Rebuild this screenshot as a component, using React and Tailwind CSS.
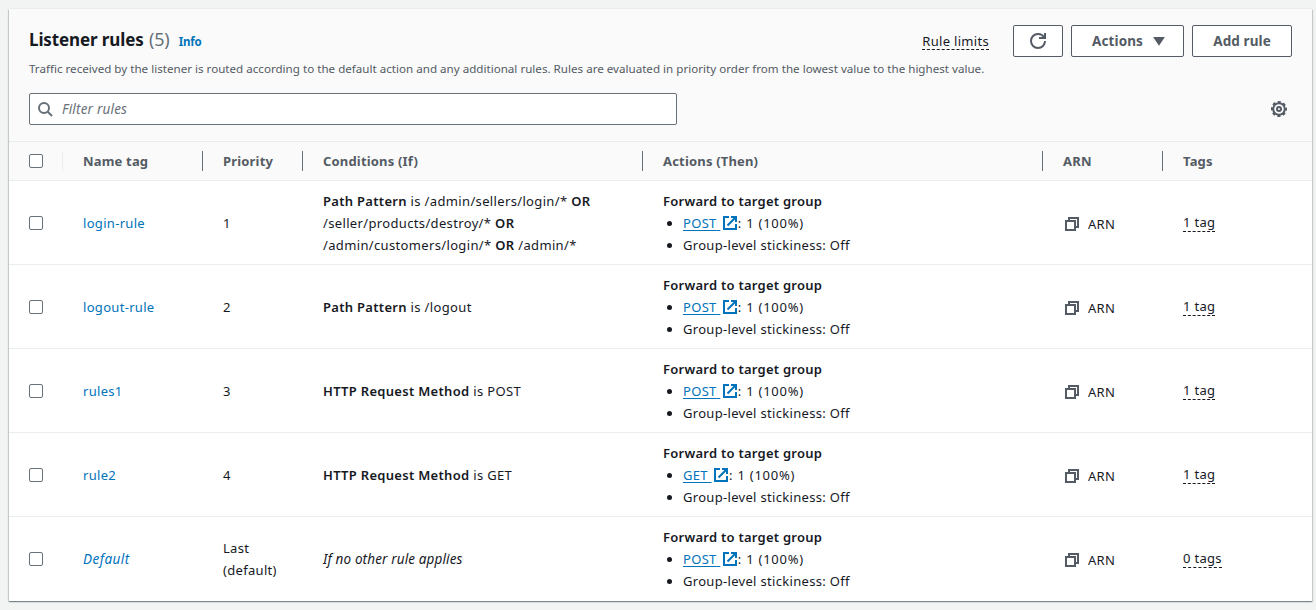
const COLUMNS = 'grid grid-cols-[54px_140px_100px_340px_400px_120px_1fr]';

const RULES = [
  {
    name: 'login-rule',
    priority: '1',
    field: 'Path Pattern',
    values: ['/admin/sellers/login/*', '/seller/products/destroy/*', '/admin/customers/login/*', '/admin/*'],
    target: 'POST',
    tags: '1 tag',
  },
  { name: 'logout-rule', priority: '2', field: 'Path Pattern', values: ['/logout'], target: 'POST', tags: '1 tag' },
  { name: 'rules1', priority: '3', field: 'HTTP Request Method', values: ['POST'], target: 'POST', tags: '1 tag' },
  { name: 'rule2', priority: '4', field: 'HTTP Request Method', values: ['GET'], target: 'GET', tags: '1 tag' },
  { name: 'Default', priority: 'Last (default)', isDefault: true, target: 'POST', tags: '0 tags' },
];

const HEADERS = ['Name tag', 'Priority', 'Conditions (If)', 'Actions (Then)', 'ARN', 'Tags'];

function Icon({ className = '', children }) {
  return (
    <svg viewBox="0 0 16 16" className={`size-4 shrink-0 fill-none stroke-current stroke-2 ${className}`} aria-hidden="true">
      {children}
    </svg>
  );
}

function ExternalIcon() {
  return (
    <Icon className="ml-[1.5px] inline-block align-[-3px]">
      <path d="M9 2h5v5M5.500 10.500 14 2" />
      <path d="M14 9v5H2V2h5" />
    </Icon>
  );
}

function Checkbox({ label }) {
  return (
    <input
      type="checkbox"
      aria-label={label}
      className="block size-3.5 appearance-none rounded-[2px] border border-[#687078] bg-white"
    />
  );
}

function Button({ className = '', children }) {
  return (
    <button
      className={`flex h-8 items-center justify-center rounded-[2px] border border-[#545b64] bg-white text-[13.5px] font-bold tracking-[0.1px] text-[#545b64] ${className}`}
    >
      {children}
    </button>
  );
}

function Conditions({ rule }) {
  if (rule.isDefault) return <em className="text-[13.5px] tracking-[0.13px]">If no other rule applies</em>;
  return (
    <div className="tracking-[0.35px]">
      <b className="font-semibold tracking-[0.3px]">{rule.field}</b> is{' '}
      {rule.values.map((value, i) => (
        <span key={value}>
          {i > 0 && <b className="font-semibold"> OR </b>}
          {value}
        </span>
      ))}
    </div>
  );
}

function RuleRow({ rule }) {
  return (
    <div className={`${COLUMNS} h-[84px] items-center border-b border-[#eaeded] pt-px last:border-white`}>
      <div className="pl-5">
        <Checkbox label={rule.name} />
      </div>
      <div className="px-5 text-[#0073bb]">
        <a className={rule.isDefault ? 'text-[13.5px] italic tracking-[0.45px]' : ''}>{rule.name}</a>
      </div>
      <div className="px-5">{rule.priority}</div>
      <div className="px-5">
        <Conditions rule={rule} />
      </div>
      <div className="px-5">
        <b className="block font-semibold tracking-[0.25px]">Forward to target group</b>
        <ul className="list-disc pl-5">
          <li>
            <a className="text-[#0073bb] underline underline-offset-2">
              {rule.target} <ExternalIcon />
            </a>
            <span className="tracking-[0.75px]">: 1 (100%)</span>
          </li>
          <li>Group-level stickiness: Off</li>
        </ul>
      </div>
      <div className="flex items-center gap-2 px-5 pt-0.5">
        <Icon className="ml-px text-[#545b64]">
          <path d="M2 5h9v9H2z" />
          <path d="M5 5V2h9v9h-3" />
        </Icon>
        <span>ARN</span>
      </div>
      <div className="flex px-5">
        <span className="border-b border-dashed border-[#16191f] leading-[17px]">{rule.tags}</span>
      </div>
    </div>
  );
}

export default function App() {
  return (
    <div className="h-[610px] overflow-hidden bg-[#f2f3f3] pt-[9px] pr-[4px] pl-[9px] font-['Noto_Sans',sans-serif] text-[13px] leading-[22px] tracking-[0.31px] text-[#16191f]">
      <section className="h-[592px] bg-white shadow-[0_1px_1px_0_rgba(0,28,36,0.3),1px_1px_1px_0_rgba(0,28,36,0.15),-1px_1px_1px_0_rgba(0,28,36,0.15),0_-1px_0_0_#eaeded]">
        <header className="h-[133px] border-b border-[#eaeded] bg-[#fafafa] px-5 pt-4">
          <div className="flex h-8 items-center">
            <h2 className="pb-[3px] text-[17px] font-bold tracking-[-0.12px]">
              Listener rules <span className="ml-px text-[18px] font-normal text-[#687078]">(5)</span>
            </h2>
            <a className="ml-[9px] pt-0.5 text-[11.5px] font-bold tracking-[-0.2px] text-[#0073bb]">Info</a>
            <span className="mr-6 ml-auto border-b border-dashed border-[#16191f] pt-px leading-[16px]">Rule limits</span>
            <div className="flex gap-2">
              <Button className="w-[50px]">
                <Icon>
                  <path d="M9 5h6V0M15 8a6.957 6.957 0 0 1-7 7 6.957 6.957 0 0 1-7-7 6.957 6.957 0 0 1 7-7 6.87 6.87 0 0 1 6.3 4" />
                </Icon>
              </Button>
              <Button className="w-[113px] gap-2 pl-1">
                Actions
                <Icon>
                  <path className="fill-current" d="M4 5h8l-4 6-4-6z" />
                </Icon>
              </Button>
              <Button className="w-[100px]">Add rule</Button>
            </div>
          </div>
          <p className="mt-px text-[11.6px] tracking-[0.008px] text-[#545b64]">
            Traffic received by the listener is routed according to the default action and any additional rules. Rules are
            evaluated in priority order from the lowest value to the highest value.
          </p>
          <div className="mt-[13px] flex items-center justify-between">
            <div className="flex h-8 w-[648px] items-center gap-2 rounded-[2px] border border-[#687078] bg-white px-[7px] text-[#687078]">
              <Icon>
                <circle cx="7" cy="7" r="5" />
                <path d="m15 15-4.500-4.500" />
              </Icon>
              <em className="ml-px text-[13.5px] tracking-[0.2px]">Filter rules</em>
            </div>
            <Icon className="mr-[5px] text-[#545b64]">
              <circle cx="8" cy="8" r="5.8" />
              <circle cx="8" cy="8" r="7" strokeDasharray="3.1 2.398" strokeDashoffset="1.55" />
              <circle cx="8" cy="8" r="2" />
            </Icon>
          </div>
        </header>
        <div
          className={`${COLUMNS} h-[39px] items-center border-b border-[#eaeded] bg-[#fafafa] font-bold tracking-[0.18px] text-[#545b64]`}
        >
          <div className="flex h-5 items-center border-r border-[#eaeded] pl-5">
            <Checkbox label="Select all rules" />
          </div>
          {HEADERS.map((title) => (
            <div key={title} className="flex h-5 items-center border-r border-[#687078] px-5 last:border-r-0">
              {title}
            </div>
          ))}
        </div>
        {RULES.map((rule) => (
          <RuleRow key={rule.name} rule={rule} />
        ))}
      </section>
    </div>
  );
}
